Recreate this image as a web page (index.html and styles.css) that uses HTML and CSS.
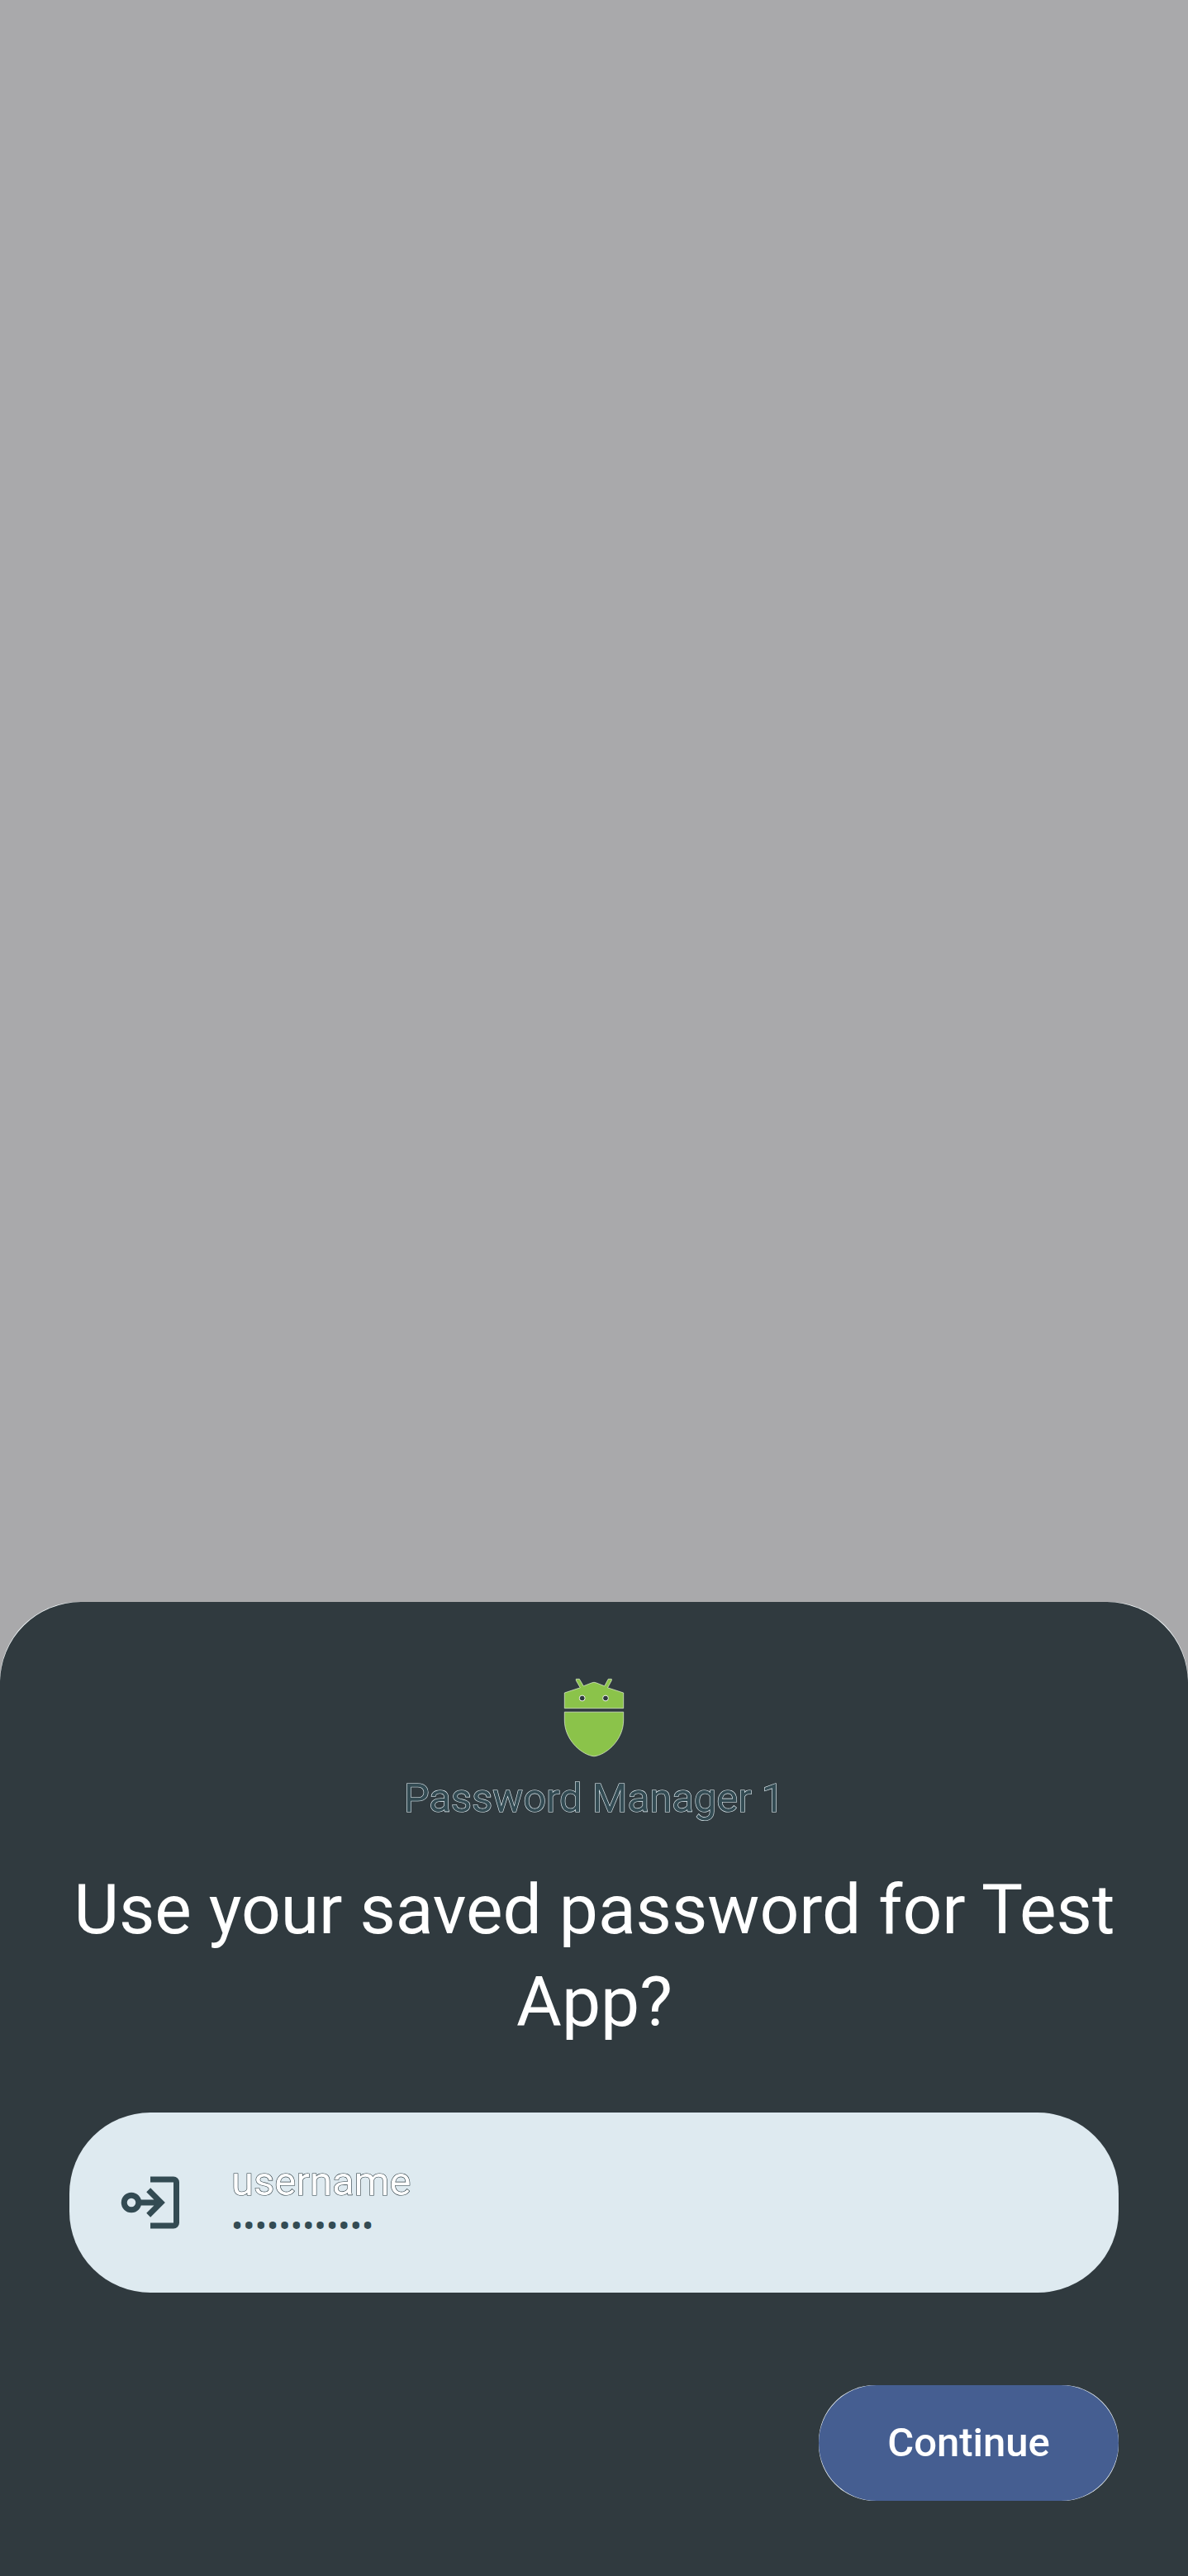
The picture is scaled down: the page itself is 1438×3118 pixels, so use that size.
FILE: index.html
```html
<!DOCTYPE html>
<html lang="en">
<head>
<meta charset="utf-8">
<title>Use saved password</title>
<link rel="stylesheet" href="styles.css">
</head>
<body>
<main class="screen">
  <section class="sheet">
    <svg class="provider-icon" viewBox="0 0 74 96" width="74" height="96" aria-hidden="true">
      <g class="shield">
        <path d="M1.300 18L20.300 11.800L15.300 3V1.300H19.300L24.300 9.800L34 6Q37 4.500 40 6L49.700 9.800L54.300 1.300H58.300V3L53.500 11.800L72.700 18V36.700H1.300Z"/>
        <path d="M1.300 41.200H72.700V51C72.700 74 54 91 40 94.300Q37 95.300 34 94.300C20 91 1.300 74 1.300 51Z"/>
      </g>
      <circle class="eye" cx="22.700" cy="24.500" r="3.400"/>
      <circle class="eye" cx="51" cy="24.500" r="3.400"/>
    </svg>
    <p class="provider">Password Manager 1</p>
    <h1 class="title">Use your saved password for Test App?</h1>
    <div class="entry">
      <svg class="entry-icon" viewBox="0 0 84 84" width="84" height="84" aria-hidden="true">
        <circle class="line" cx="19" cy="42" r="8.750"/>
        <path class="line" d="M30 42H54M39.700 26.800L54.900 42L39.700 57.200"/>
        <path class="solid" d="M42 10.500H70a7 7 0 0 1 7 7V66.500a7 7 0 0 1-7 7H42v-7H70V17.500H42Z"/>
      </svg>
      <div class="entry-text">
        <span class="username">username</span>
        <span class="password">••••••••••••</span>
      </div>
    </div>
    <button class="continue">Continue</button>
  </section>
</main>
</body>
</html>
```

FILE: styles.css
```css
body {
  margin: 0;
  font-family: Roboto, sans-serif;
}

.screen {
  box-sizing: border-box;
  height: 3118px;
  padding-top: 1939px;
  background: #a9a9ab;
}

.sheet {
  position: relative;
  isolation: isolate;
  box-sizing: border-box;
  height: 1179px;
  padding: 92px 84px 0;
  display: flex;
  flex-direction: column;
  align-items: center;
  border-radius: 96px 96px 0 0;
  background: #f4fafc;
}

/* Rounder fill over a pale base leaves a thin highlight on the corners only. */
.sheet::before,
.continue::before {
  content: "";
  position: absolute;
  inset: 0;
  z-index: -1;
}

.sheet::before {
  border-radius: 98px 98px 0 0;
  background: #303a3f;
}

.provider-icon {
  flex: none;
}

.shield {
  fill: #8bc34a;
  stroke: #e6f2d8;
  stroke-width: 0.7;
}

.eye {
  fill: #303a3f;
  stroke: #f2f8ea;
  stroke-width: 1;
}

.provider {
  margin: 15px 0 0;
  font-size: 49px;
  line-height: 70px;
  letter-spacing: -0.05px;
  color: #334b53;
  -webkit-text-stroke: 1.2px #e6f2f7;
  paint-order: stroke fill;
}

.title {
  margin: 44px 0 0;
  padding-left: 1px;
  font-size: 84px;
  font-weight: 400;
  line-height: 112px;
  text-align: center;
  color: #fff;
}

.entry {
  box-sizing: border-box;
  width: 100%;
  height: 218px;
  margin-top: 77px;
  padding: 0 56px;
  display: flex;
  align-items: center;
  gap: 56px;
  border-radius: 98px;
  background: #deeaf0;
}

.entry-text {
  display: flex;
  flex-direction: column;
}

.username {
  font-size: 49px;
  line-height: 58px;
  color: #fff;
  -webkit-text-stroke: 1.2px #26363d;
  paint-order: stroke fill;
}

.password {
  font-size: 42px;
  line-height: 50px;
  letter-spacing: 0.2px;
  color: #334b53;
}

.line {
  fill: none;
  stroke: #334b53;
  stroke-width: 7;
}

.solid {
  fill: #334b53;
}

.continue {
  position: relative;
  isolation: isolate;
  align-self: flex-end;
  width: 363px;
  height: 140px;
  margin-top: 112px;
  padding: 0;
  border: 0;
  border-radius: 68px;
  background: #f4fafc;
  font: 500 49px/70px Roboto, sans-serif;
  color: #fff;
}

.continue::before {
  border-radius: 70px;
  background: #455e91;
}
```
